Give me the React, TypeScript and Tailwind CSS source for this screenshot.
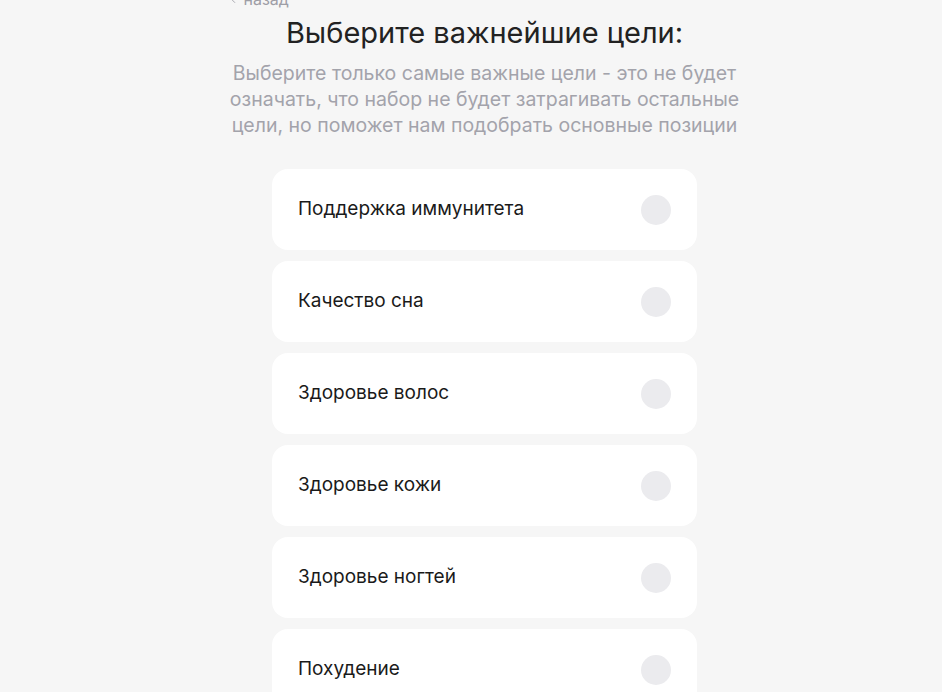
import { ChevronLeft } from 'lucide-react';

const goals = [
  'Поддержка иммунитета',
  'Качество сна',
  'Здоровье волос',
  'Здоровье кожи',
  'Здоровье ногтей',
  'Похудение',
];

export default function App() {
  return (
    <div className="h-[692px] overflow-hidden bg-[#f6f6f6] font-['Inter','Noto_Sans',sans-serif]">
      <div className="flex justify-center pl-[27px]">
        <div className="flex w-[520px] flex-col items-center">
          <div className="-mt-[11px] flex w-full items-center gap-[4px] pl-[1px] text-[16px] leading-[20px] text-[#9e9ea6]">
            <ChevronLeft className="h-3.5 w-3.5" strokeWidth={1.5} />
            <span>назад</span>
          </div>
          <h1 className="mt-[4px] text-[29px] leading-[40px] text-[#222]">
            Выберите важнейшие цели:
          </h1>
          <p className="mt-[7px] w-[520px] text-center text-[19.5px] leading-[26px] text-[#a3a3ab]">
            Выберите только самые важные цели - это не будет означать, что набор не будет затрагивать остальные цели, но поможет нам подобрать основные позиции
          </p>
          <div className="mt-[31px] flex w-[425px] flex-col gap-[11px]">
            {goals.map((g) => (
              <div
                key={g}
                className="flex h-[81px] items-center justify-between rounded-[16px] bg-white pl-[26px] pr-[26px]"
              >
                <span className="text-[19px] text-[#1a1a1a]">{g}</span>
                <span className="h-[30px] w-[30px] rounded-full bg-[#ebebee]" />
              </div>
            ))}
          </div>
        </div>
      </div>
    </div>
  );
}
